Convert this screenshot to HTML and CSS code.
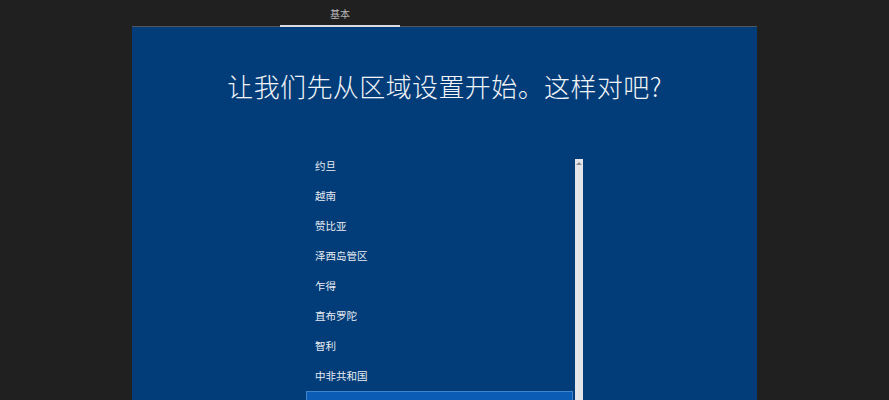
FILE: index.html
```html
<!DOCTYPE html>
<html lang="zh">
<head>
<meta charset="utf-8">
<link rel="stylesheet" href="styles.css">
</head>
<body>
<div class="page">
  <div class="topbar">
    <div class="tabstrip">
      <div class="tab">基本</div>
    </div>
  </div>
  <div class="panel">
    <h1 class="title">让我们先从区域设置开始。这样对吧?</h1>
    <div class="listbox">
      <ul class="list">
        <li class="item">约旦</li>
        <li class="item">越南</li>
        <li class="item">赞比亚</li>
        <li class="item">泽西岛管区</li>
        <li class="item">乍得</li>
        <li class="item">直布罗陀</li>
        <li class="item">智利</li>
        <li class="item">中非共和国</li>
        <li class="item selected"></li>
      </ul>
      <div class="scrollbar"><span class="arrow"></span></div>
    </div>
  </div>
</div>
</body>
</html>
```
FILE: styles.css
```css
html, body {
  margin: 0;
  padding: 0;
  background: #202020;
  font-family: "Noto Sans CJK SC", "Noto Sans", sans-serif;
}
.page {
  width: 889px;
  height: 400px;
  overflow: hidden;
  display: flex;
  flex-direction: column;
}
.topbar {
  height: 27px;
  padding-left: 132px;
  box-sizing: border-box;
}
.tabstrip {
  width: 625px;
  height: 27px;
  box-sizing: border-box;
  border-bottom: 1px solid #4f5660;
  display: flex;
}
.tab {
  margin-left: 148px;
  width: 120px;
  height: 27px;
  box-sizing: border-box;
  border-bottom: 2px solid #d8dce2;
  text-align: center;
  color: #b8b8b8;
  font-size: 10px;
  line-height: 27px;
  margin-bottom: -1px;
}
.panel {
  margin-left: 132px;
  width: 625px;
  flex: 1;
  background: #023d79;
  display: flex;
  flex-direction: column;
  align-items: center;
  overflow: hidden;
}
.title {
  margin: 41px 0 0;
  font-weight: 300;
  font-size: 26px;
  line-height: 36px;
  color: #f2f4f8;
  letter-spacing: 0.4px;
}
.listbox {
  margin-top: 47px;
  width: 277px;
  flex: 1;
  display: flex;
}
.list {
  list-style: none;
  margin: 0;
  padding: 0;
  width: 269px;
}
.item {
  height: 30px;
  line-height: 30px;
  padding-left: 9px;
  font-size: 10.5px;
  color: #e8ecf2;
}
.item.selected {
  background: #0a5cb4;
  border: 1px solid #3b86cf;
  margin-right: 2px;
  box-sizing: border-box;
}
.scrollbar {
  margin-top: 8px;
  width: 8px;
  background: #e3e5e8;
  display: flex;
  justify-content: center;
}
.arrow {
  margin-top: 3px;
  width: 0;
  height: 0;
  border-left: 3px solid transparent;
  border-right: 3px solid transparent;
  border-bottom: 3px solid #8a8e94;
}
```
